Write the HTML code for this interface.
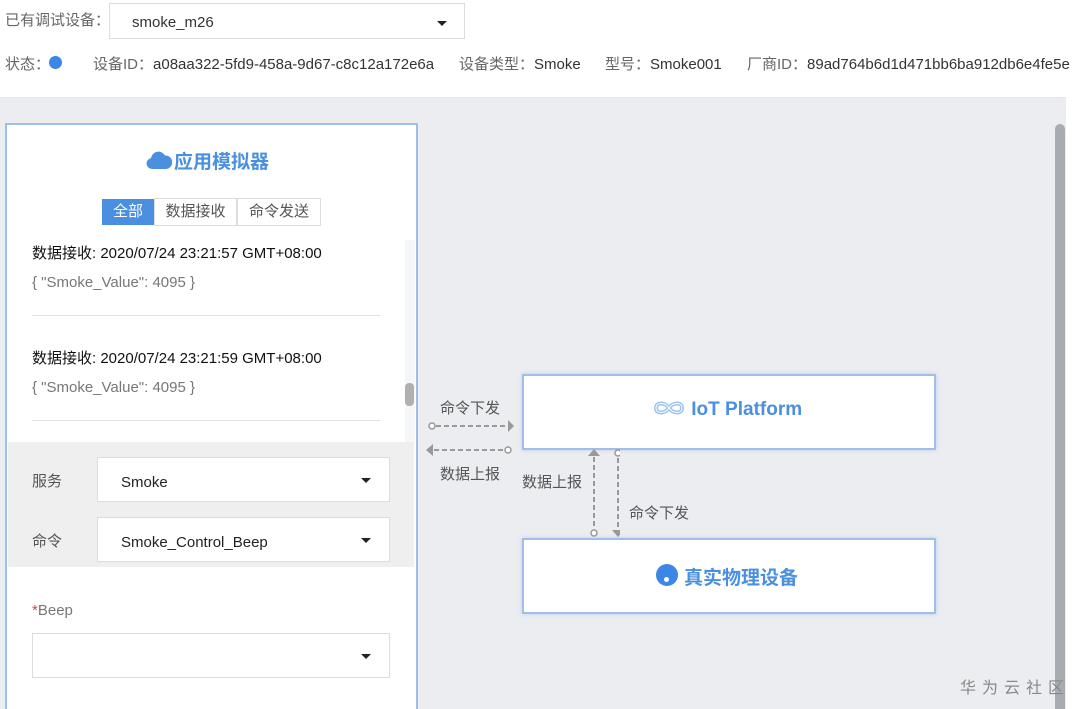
<!DOCTYPE html>
<html><head><meta charset="utf-8"><style>
*{margin:0;padding:0;box-sizing:border-box}
html,body{width:1080px;height:709px;overflow:hidden}
body{background:#fff;font-family:"Liberation Sans","Noto Sans CJK SC",sans-serif;font-size:15px;color:#333;position:relative}
.a{position:absolute}
.sel{position:absolute;background:#fff;border:1px solid #dcdcdc}
.caret{position:absolute;width:0;height:0;border-left:5px solid transparent;border-right:5px solid transparent;border-top:5px solid #222}
.g{color:#666}
.box{position:absolute;background:#fff;border:2px solid #9dbfe8;box-shadow:0 0 4px rgba(120,160,220,.4)}
.lbl{position:absolute;font-size:15px;color:#555}
</style></head><body>
<div class="a g" style="left:5px;top:9px">已有调试设备：</div>
<div class="sel" style="left:109px;top:3px;width:356px;height:36px"><span class="a" style="left:22px;top:10px;color:#333">smoke_m26</span><div class="caret" style="left:327px;top:17px"></div></div>
<div class="a" style="left:5px;top:53px;white-space:nowrap"><span class="g">状态：</span></div>
<div class="a" style="left:49px;top:56px;width:13px;height:13px;border-radius:50%;background:#3b86e6"></div>
<div class="a" style="left:93px;top:53px;white-space:nowrap"><span class="g">设备ID：</span>a08aa322-5fd9-458a-9d67-c8c12a172e6a</div>
<div class="a" style="left:459px;top:53px;white-space:nowrap"><span class="g">设备类型：</span>Smoke</div>
<div class="a" style="left:605px;top:53px;white-space:nowrap"><span class="g">型号：</span>Smoke001</div>
<div class="a" style="left:747px;top:53px;white-space:nowrap"><span class="g">厂商ID：</span>89ad764b6d1d471bb6ba912db6e4fe5e</div>

<div class="a" style="left:0;top:97px;width:1066px;height:612px;background:#ebedf1;border-top:1px solid #e4e6ea"></div>
<div class="a" style="left:1055px;top:124px;width:10px;height:585px;background:#a8abb0;border-radius:5px 5px 0 0"></div>

<div class="a" style="left:5px;top:123px;width:413px;height:600px;background:#fff;border:2px solid #9dbfe8"></div>
<div class="a" style="left:146px;top:148px;width:26px;height:22px">
<svg width="26" height="22" viewBox="0 0 26 22"><path d="M6 21a5.5 5.5 0 0 1-1-10.9A7.5 7.5 0 0 1 19 7.5 6.5 6.5 0 0 1 20 21z" fill="#4a8fe0"/></svg></div>
<div class="a" style="left:174px;top:147px;font-size:19px;font-weight:bold;color:#4a8fe0">应用模拟器</div>
<div class="a" style="left:102px;top:199px;width:52px;height:26px;background:#4a8fe0;color:#fff;text-align:center;line-height:26px">全部</div>
<div class="a" style="left:154px;top:198px;width:83px;height:28px;border:1px solid #ddd;text-align:center;line-height:26px;color:#555">数据接收</div>
<div class="a" style="left:237px;top:198px;width:84px;height:28px;border:1px solid #ddd;text-align:center;line-height:26px;color:#555">命令发送</div>
<div class="a" style="left:32px;top:242px;color:#111;white-space:nowrap">数据接收: 2020/07/24 23:21:57 GMT+08:00</div>
<div class="a" style="left:32px;top:274px;color:#777">{ "Smoke_Value": 4095 }</div>
<div class="a" style="left:32px;top:315px;width:348px;height:1px;background:#e2e2e2"></div>
<div class="a" style="left:32px;top:347px;color:#111;white-space:nowrap">数据接收: 2020/07/24 23:21:59 GMT+08:00</div>
<div class="a" style="left:32px;top:379px;color:#777">{ "Smoke_Value": 4095 }</div>
<div class="a" style="left:32px;top:420px;width:348px;height:1px;background:#e2e2e2"></div>
<div class="a" style="left:405px;top:240px;width:10px;height:202px;background:#f5f6f8"></div>
<div class="a" style="left:405px;top:383px;width:9px;height:23px;background:#b0b0b0;border-radius:4px"></div>

<div class="a" style="left:8px;top:442px;width:406px;height:125px;background:#efefef"></div>
<div class="lbl" style="left:32px;top:470px">服务</div>
<div class="sel" style="left:97px;top:457px;width:293px;height:45px"><span class="a" style="left:23px;top:16px;color:#222">Smoke</span><div class="caret" style="left:263px;top:20px"></div></div>
<div class="lbl" style="left:32px;top:530px">命令</div>
<div class="sel" style="left:97px;top:517px;width:293px;height:45px"><span class="a" style="left:23px;top:16px;color:#222">Smoke_Control_Beep</span><div class="caret" style="left:263px;top:20px"></div></div>
<div class="a" style="left:32px;top:602px;color:#777"><span style="color:#e04040">*</span>Beep</div>
<div class="sel" style="left:32px;top:633px;width:358px;height:45px"><div class="caret" style="left:328px;top:20px"></div></div>

<div class="box" style="left:522px;top:374px;width:414px;height:76px"></div>
<div class="a" style="left:652px;top:398px;font-size:19px;font-weight:bold;color:#4a8fe0;white-space:nowrap">
<svg width="34" height="20" viewBox="0 0 34 20" style="vertical-align:-3px"><path d="M17 10c-4-6-13-6-13 0s9 6 13 0c4-6 13-6 13 0s-9 6-13 0z" fill="none" stroke="#9cc3ee" stroke-width="4"/><path d="M17 10c-4-6-13-6-13 0s9 6 13 0c4-6 13-6 13 0s-9 6-13 0z" fill="none" stroke="#fff" stroke-width="1"/></svg> IoT Platform</div>
<div class="box" style="left:522px;top:538px;width:414px;height:76px"></div>
<div class="a" style="left:656px;top:564px;width:22px;height:22px;border-radius:50%;background:#3b86e6"></div>
<div class="a" style="left:664px;top:577px;width:5px;height:5px;border-radius:50%;background:#fff"></div>
<div class="a" style="left:684px;top:563px;font-size:19px;font-weight:bold;color:#4a8fe0">真实物理设备</div>

<svg class="a" style="left:420px;top:390px" width="200" height="150" viewBox="420 390 200 150">
<g stroke="#999" stroke-width="2" stroke-dasharray="5 3" fill="none">
<line x1="436" y1="426" x2="508" y2="426"/><line x1="434" y1="450" x2="504" y2="450"/>
<line x1="594" y1="457" x2="594" y2="528"/><line x1="618" y1="458" x2="618" y2="530"/></g>
<g fill="#fff" stroke="#999" stroke-width="1.5"><circle cx="432" cy="426" r="3"/><circle cx="508" cy="450" r="3"/><circle cx="618" cy="453" r="3"/><circle cx="594" cy="533" r="3"/></g>
<g fill="#999"><path d="M508 420l6 6-6 6z"/><path d="M433 444l-7 6 7 6z"/><path d="M588 456l6-7 6 7z"/><path d="M612 530l6 7 6-7z"/></g>
</svg>
<div class="lbl" style="left:440px;top:397px">命令下发</div>
<div class="lbl" style="left:440px;top:463px">数据上报</div>
<div class="lbl" style="left:522px;top:471px">数据上报</div>
<div class="lbl" style="left:629px;top:502px">命令下发</div>
<div class="a" style="left:960px;top:674px;font-size:16px;color:#888;letter-spacing:6px;white-space:nowrap">华为云社区</div>
</body></html>
